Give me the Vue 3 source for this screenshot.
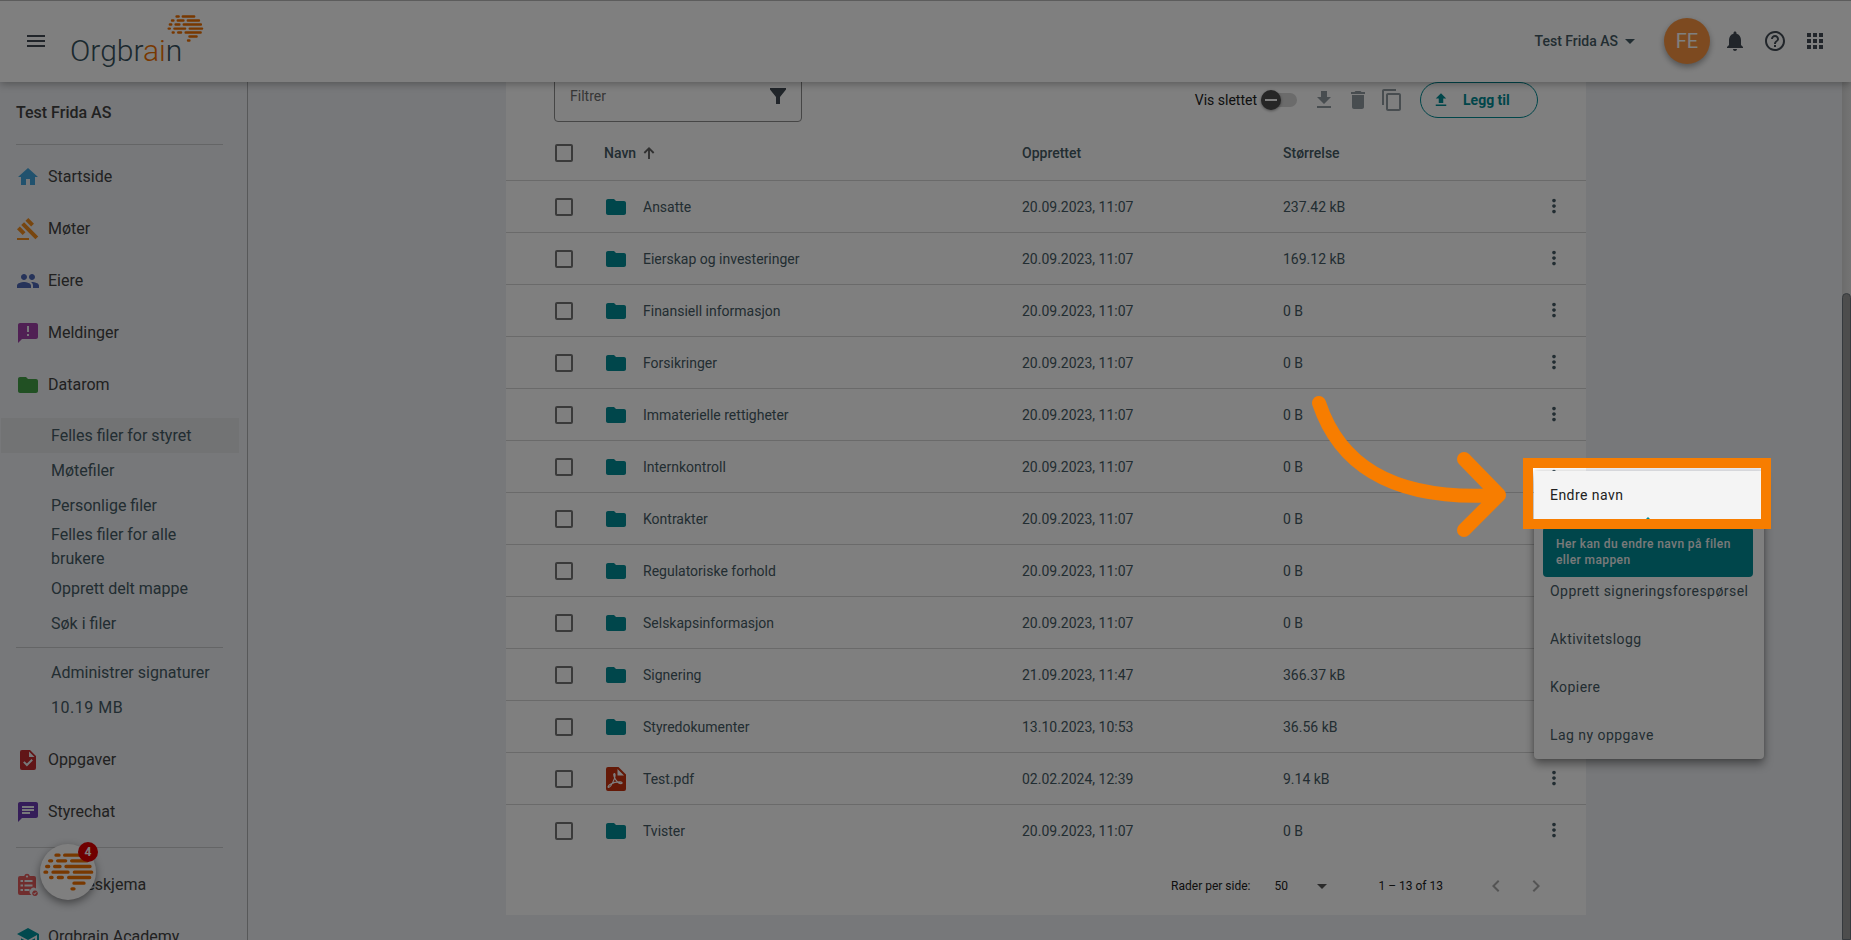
<script setup>
import { ref, h } from 'vue'

const paths = {
  menu: 'M3 18h18v-2H3v2zm0-5h18v-2H3v2zm0-7v2h18V6H3z',
  home: 'M10 20v-6h4v6h5v-8h3L12 3 2 12h3v8z',
  gavel: 'M1 21h12v2H1zM5.245 8.07l2.83-2.827 14.14 14.142-2.828 2.828zM12.317 1l5.657 5.656-2.83 2.83-5.654-5.66zM3.825 9.485l5.657 5.657-2.828 2.828-5.657-5.657z',
  group: 'M16 11c1.66 0 2.99-1.34 2.99-3S17.66 5 16 5s-3 1.34-3 3 1.34 3 3 3zm-8 0c1.66 0 2.99-1.34 2.99-3S9.66 5 8 5 5 6.34 5 8s1.34 3 3 3zm0 2c-2.33 0-7 1.17-7 3.5V19h14v-2.5c0-2.33-4.67-3.5-7-3.5zm8 0c-.29 0-.62.02-.97.05 1.16.84 1.97 1.97 1.97 3.45V19h6v-2.5c0-2.33-4.67-3.5-7-3.5z',
  announcement: 'M20 2H4c-1.1 0-1.99.9-1.99 2L2 22l4-4h14c1.1 0 2-.9 2-2V4c0-1.1-.9-2-2-2zm-7 9h-2V5h2v6zm0 4h-2v-2h2v2z',
  folder: 'M10 4H4c-1.1 0-1.99.9-1.99 2L2 18c0 1.1.9 2 2 2h16c1.1 0 2-.9 2-2V8c0-1.1-.9-2-2-2h-8l-2-2z',
  task: 'M6 2h8l6 6v12a2 2 0 0 1-2 2H6a2 2 0 0 1-2-2V4a2 2 0 0 1 2-2zM13 3.5V9h5.5zM10.9 18.4l6-6-1.4-1.4-4.6 4.6-2.4-2.4-1.4 1.4z',
  chat: 'M20 2H4c-1.1 0-1.99.9-1.99 2L2 22l4-4h14c1.1 0 2-.9 2-2V4c0-1.1-.9-2-2-2zM6 9h12v2H6V9zm8 5H6v-2h8v2zm4-6H6V6h12v2z',
  form: 'M4 3h4.2a2.9 2.9 0 0 1 5.600 0H18a2 2 0 0 1 2 2v10.500a3.800 3.800 0 0 0-4.600 6.500H4a2 2 0 0 1-2-2V5a2 2 0 0 1 2-2zM11 2.500a1 1 0 1 0 .01 0zM4.500 7v2H7V7zM8.500 7v2h8V7zM4.500 11.500v2H7v-2zM8.500 11.500v2h8v-2zM4.500 16v2H7v-2zM8.500 16v2h5v-2zM19 17.500a2.800 2.800 0 1 0 .01 0zM18.700 21.800l2-2.200-.7-.6-1.400 1.500-.7-.6-.6.7z',
  school: 'M5 13.18v4L12 21l7-3.820v-4L12 17l-7-3.820zM12 3L1 9l11 6 9-4.910V17h2V9L12 3z',
  bell: 'M12 22c1.100 0 2-.9 2-2h-4c0 1.100.89 2 2 2zm6-6v-5c0-3.070-1.640-5.640-4.500-6.320V4c0-.83-.67-1.500-1.500-1.500s-1.500.67-1.500 1.500v.68C7.630 5.360 6 7.920 6 11v5l-2 2v1h16v-1l-2-2z',
  help: 'M11 18h2v-2h-2v2zm1-16C6.480 2 2 6.480 2 12s4.480 10 10 10 10-4.480 10-10S17.520 2 12 2zm0 18c-4.410 0-8-3.590-8-8s3.590-8 8-8 8 3.590 8 8-3.590 8-8 8zm0-14c-2.210 0-4 1.790-4 4h2c0-1.100.9-2 2-2s2 .9 2 2c0 2-3 1.750-3 5h2c0-2.250 3-2.500 3-5 0-2.210-1.790-4-4-4z',
  apps: 'M4 8h4V4H4v4zm6 12h4v-4h-4v4zm-6 0h4v-4H4v4zm0-6h4v-4H4v4zm6 0h4v-4h-4v4zm6-10v4h4V4h-4zm-6 4h4V4h-4v4zm6 6h4v-4h-4v4zm0 6h4v-4h-4v4z',
  caret: 'M7 10l5 5 5-5z',
  filter: 'M4 4h16v1.500L14 13v7h-4v-7L4 5.500z',
  download: 'M19 9h-4V3H9v6H5l7 7 7-7zM5 18v2h14v-2H5z',
  upload: 'M9 16h6v-6h4l-7-7-7 7h4zm-4 2h14v2H5z',
  trash: 'M6 19c0 1.100.9 2 2 2h8c1.100 0 2-.9 2-2V7H6v12zM19 4h-3.500l-1-1h-5l-1 1H5v2h14V4z',
  copy: 'M16 1H4c-1.100 0-2 .9-2 2v14h2V3h12V1zm3 4H8c-1.100 0-2 .9-2 2v14c0 1.100.9 2 2 2h11c1.100 0 2-.9 2-2V7c0-1.100-.9-2-2-2zm0 16H8V7h11v14z',
  up: 'M4 11l2 2 4.600-4.600V21h2.800V8.400L18 13l2-2-8-8z',
  more: 'M12 8c1.100 0 2-.9 2-2s-.9-2-2-2-2 .9-2 2 .9 2 2 2zm0 2c-1.100 0-2 .9-2 2s.9 2 2 2 2-.9 2-2-.9-2-2-2zm0 6c-1.100 0-2 .9-2 2s.9 2 2 2 2-.9 2-2-.9-2-2-2z',
  prev: 'M15.410 7.410L14 6l-6 6 6 6 1.410-1.410L10.830 12z',
  next: 'M10 6L8.590 7.410 13.170 12l-4.580 4.590L10 18l6-6z',
}

const Icon = ({ name, size = 24 }) =>
  h('svg', { viewBox: '0 0 24 24', width: size, height: size, fill: 'currentColor', 'fill-rule': 'evenodd', 'aria-hidden': 'true' }, [
    h('path', { d: paths[name] }),
  ])

const brainDashes = [
  [465, 167, 176], [465, 193, 241],
  [482, 148, 154], [482, 172, 196], [482, 214, 261],
  [499, 139, 145], [499, 163, 179], [499, 197, 269],
  [516, 134, 139], [516, 158, 203], [516, 222, 274],
  [532, 151, 155], [532, 174, 186], [532, 205, 268],
  [549, 221, 251],
  [566, 215, 221],
].map(([y, a, b]) => `M${a} ${y}H${b}`).join('')

const Brain = ({ width, height }) =>
  h('svg', { viewBox: '128 459 153 113', width, height, fill: 'none', stroke: '#f07000', 'stroke-width': 10, 'stroke-linecap': 'round', 'aria-hidden': 'true' }, [
    h('path', { d: brainDashes }),
  ])
Icon.props = ['name', 'size']
Brain.props = ['width', 'height']

const mainNav = [
  { label: 'Startside', icon: 'home', tone: 'blue' },
  { label: 'Møter', icon: 'gavel', tone: 'orange' },
  { label: 'Eiere', icon: 'group', tone: 'indigo' },
  { label: 'Meldinger', icon: 'announcement', tone: 'purple' },
  { label: 'Datarom', icon: 'folder', tone: 'green' },
]
const subNav = ['Felles filer for styret', 'Møtefiler', 'Personlige filer', 'Felles filer for alle brukere', 'Opprett delt mappe', 'Søk i filer']
const lowerNav = [
  { label: 'Oppgaver', icon: 'task', tone: 'red' },
  { label: 'Styrechat', icon: 'chat', tone: 'violet' },
]
const extraNav = [
  { label: 'Spørreskjema', icon: 'form', tone: 'coral' },
  { label: 'Orgbrain Academy', icon: 'school', tone: 'teal' },
]
const rows = [
  ['Ansatte', '20.09.2023, 11:07', '237.42 kB'],
  ['Eierskap og investeringer', '20.09.2023, 11:07', '169.12 kB'],
  ['Finansiell informasjon', '20.09.2023, 11:07', '0 B'],
  ['Forsikringer', '20.09.2023, 11:07', '0 B'],
  ['Immaterielle rettigheter', '20.09.2023, 11:07', '0 B'],
  ['Internkontroll', '20.09.2023, 11:07', '0 B'],
  ['Kontrakter', '20.09.2023, 11:07', '0 B'],
  ['Regulatoriske forhold', '20.09.2023, 11:07', '0 B'],
  ['Selskapsinformasjon', '20.09.2023, 11:07', '0 B'],
  ['Signering', '21.09.2023, 11:47', '366.37 kB'],
  ['Styredokumenter', '13.10.2023, 10:53', '36.56 kB'],
  ['Test.pdf', '02.02.2024, 12:39', '9.14 kB'],
  ['Tvister', '20.09.2023, 11:07', '0 B'],
].map(([name, created, size]) => ({ name, created, size, pdf: name.endsWith('.pdf') }))

const menuItems = ['Opprett signeringsforespørsel', 'Aktivitetslogg', 'Kopiere', 'Lag ny oppgave']
const filter = ref('')
const showDeleted = ref(false)
const pageSize = ref('50')
</script>

<template>
  <div class="page">
    <header class="topbar">
      <button class="icon-btn" aria-label="Meny"><Icon name="menu" /></button>
      <a class="logo" href="#" aria-label="Orgbrain">
        <span class="wordmark">Orgbr<span class="accent">ai</span>n</span>
        <Brain class="logo-mark" :width="37" :height="27" />
      </a>
      <div class="top-actions">
        <button class="company">Test Frida AS <Icon name="caret" /></button>
        <button class="avatar">FE</button>
        <button class="icon-btn" aria-label="Varsler"><Icon name="bell" /></button>
        <button class="icon-btn" aria-label="Hjelp"><Icon name="help" /></button>
        <button class="icon-btn" aria-label="Apper"><Icon name="apps" /></button>
      </div>
    </header>

    <div class="body">
      <nav class="sidebar">
        <h2>Test Frida AS</h2>
        <hr />
        <a v-for="n in mainNav" :key="n.label" href="#" class="nav-item">
          <Icon :name="n.icon" :class="n.tone" />{{ n.label }}
        </a>
        <div class="sub">
          <a v-for="(s, i) in subNav" :key="s" href="#" :class="{ active: i === 0 }">{{ s }}</a>
        </div>
        <hr class="tight" />
        <div class="sub last">
          <a href="#">Administrer signaturer</a>
          <span class="usage">10.19 MB</span>
        </div>
        <a v-for="n in lowerNav" :key="n.label" href="#" class="nav-item">
          <Icon :name="n.icon" :class="n.tone" />{{ n.label }}
        </a>
        <hr class="loose" />
        <a v-for="n in extraNav" :key="n.label" href="#" class="nav-item">
          <Icon :name="n.icon" :class="n.tone" />{{ n.label }}
        </a>
      </nav>

      <main>
        <section class="card">
          <div class="toolbar">
            <div class="filter">
              <input v-model="filter" type="text" placeholder="Filtrer" aria-label="Filtrer" />
              <Icon name="filter" />
            </div>
            <label class="toggle">
              Vis slettet
              <input v-model="showDeleted" type="checkbox" role="switch" />
              <span class="track"><span class="knob"></span></span>
            </label>
            <button class="tool" aria-label="Last ned"><Icon name="download" /></button>
            <button class="tool" aria-label="Slett"><Icon name="trash" /></button>
            <button class="tool" aria-label="Kopier"><Icon name="copy" /></button>
            <button class="add"><Icon name="upload" :size="18" />Legg til</button>
          </div>

          <table>
            <colgroup>
              <col class="c-check" /><col /><col class="c-date" /><col class="c-size" /><col class="c-more" />
            </colgroup>
            <thead>
              <tr>
                <th class="check"><input type="checkbox" aria-label="Velg alle" /></th>
                <th><span class="sort">Navn <Icon name="up" :size="16" /></span></th>
                <th>Opprettet</th>
                <th>Størrelse</th>
                <th></th>
              </tr>
            </thead>
            <tbody>
              <tr v-for="r in rows" :key="r.name">
                <td class="check"><input type="checkbox" :aria-label="r.name" /></td>
                <td>
                  <span class="file">
                    <svg v-if="r.pdf" class="pdf" viewBox="0 0 24 24" width="24" height="24" aria-hidden="true">
                      <path fill="#c8330f" fill-rule="evenodd" d="M4 0h10.500L22 7.500V22a2 2 0 0 1-2 2H4a2 2 0 0 1-2-2V2a2 2 0 0 1 2-2zM13.500 2v6.500H20z" />
                      <path fill="none" stroke="#fff" stroke-width="1.200" stroke-linejoin="round" d="M10.200 6.500c-1.300.6.300 4.300 1.500 6.200 1.500 2.300 3.800 3.900 5.300 3.900 1.600 0 1.500-1.700-.7-1.800-3.200-.1-7.500 1-9.900 2.400-2.200 1.200-2.800 3.100-1.900 3.200 1.600.2 4.400-5 5.800-8.500.8-2.200 1.200-5.600-.1-5.400z" />
                    </svg>
                    <Icon v-else name="folder" class="folder" />
                    {{ r.name }}
                  </span>
                </td>
                <td>{{ r.created }}</td>
                <td>{{ r.size }}</td>
                <td class="more"><button :aria-label="'Valg for ' + r.name"><Icon name="more" :size="22" /></button></td>
              </tr>
            </tbody>
          </table>

          <footer class="pager">
            <label for="size">Rader per side:</label>
            <span class="select">
              <select id="size" v-model="pageSize"><option>50</option><option>100</option></select>
              <Icon name="caret" />
            </span>
            <span class="range">1 – 13 of 13</span>
            <button disabled aria-label="Forrige"><Icon name="prev" /></button>
            <button disabled aria-label="Neste"><Icon name="next" /></button>
          </footer>

          <div class="menu" role="menu">
            <button class="hover" role="menuitem">Endre navn</button>
            <div class="tip-slot">
              <div class="tip" role="tooltip">Her kan du endre navn på filen eller mappen</div>
            </div>
            <button v-for="m in menuItems" :key="m" role="menuitem">{{ m }}</button>
          </div>
          <div class="spotlight"></div>
          <svg class="arrow" viewBox="0 0 200 150" width="200" height="150" aria-hidden="true">
            <path d="M13 15C32 72 80 114 193 107M158 71L193 107L158 142" />
          </svg>
        </section>
      </main>
      <div class="scrollbar"><div class="thumb"></div></div>
    </div>

    <button class="chat" aria-label="Chat">
      <Brain :width="51" :height="38" />
      <span class="badge">4</span>
    </button>
  </div>
</template>

<style>
html,
body {
  overflow: hidden;
}
</style>

<style scoped>
.page,
.page * {
  box-sizing: border-box;
}
.page {
  position: relative;
  display: flex;
  flex-direction: column;
  height: 100vh;
  overflow: hidden;
  background: #eef0f4;
  color: #455a64;
  font: 14px/20px Roboto, "Open Sans", sans-serif;
}
svg {
  display: block;
  flex: none;
}
button {
  padding: 0;
  border: 0;
  background: none;
  color: inherit;
  font: inherit;
  cursor: pointer;
}
a {
  color: inherit;
  text-decoration: none;
}
.topbar {
  position: relative;
  z-index: 5;
  display: flex;
  flex: none;
  align-items: center;
  height: 82px;
  padding: 0 24px;
  background: #fff;
  box-shadow: inset 0 1px 0 #b8b8b8, 0 2px 8px rgba(0, 0, 0, 0.3);
}
.icon-btn {
  color: #424b54;
}
.logo {
  display: flex;
  align-items: flex-start;
  height: 52px;
  margin-left: 22px;
}
.wordmark {
  padding-top: 18px;
  color: #37525e;
  font: 300 30px/36px Roboto, "Noto Sans", sans-serif;
}
.accent {
  color: #f07000;
}
.logo-mark {
  margin-left: -15px;
}
.top-actions {
  display: flex;
  align-items: center;
  gap: 16px;
  margin-left: auto;
}
.company {
  display: flex;
  align-items: center;
  margin-right: 6px;
  font-weight: 500;
}
.avatar {
  width: 46px;
  height: 46px;
  margin-right: -3px;
  border-radius: 50%;
  background: #fb9540;
  color: #fff;
  font-size: 20px;
  box-shadow: 0 3px 6px rgba(0, 0, 0, 0.35);
}
.body {
  display: flex;
  flex: 1;
  min-height: 0;
}
.sidebar {
  flex: none;
  width: 248px;
  padding-top: 19px;
  border-right: 1px solid #aeb0b3;
  color: #424242;
  font-size: 16px;
  line-height: 24px;
}
.sidebar h2 {
  margin: 0 16px;
  font-size: 16px;
  font-weight: 500;
}
.sidebar hr {
  height: 1px;
  margin: 19px 24px 6px 16px;
  border: 0;
  background: #c9cacc;
}
.sidebar hr.tight {
  margin: 6px 24px 7px 16px;
}
.sidebar hr.loose {
  margin: 9px 24px 11px 16px;
}
.nav-item {
  display: flex;
  align-items: center;
  gap: 8px;
  height: 52px;
  padding-left: 16px;
}
.sub {
  margin: 7px 8px 0 1px;
  color: #455a64;
}
.sub.last {
  margin: 0 8px 9px 1px;
}
.sub a,
.sub span {
  display: flex;
  align-items: center;
  min-height: 35px;
  padding: 0 40px 0 50px;
}
.sub.last a {
  padding-right: 0;
}
.sub .active {
  background: #e4e6e9;
  padding-right: 0;
}
.sub .usage {
  letter-spacing: 0.5px;
}
.blue { color: #42a5dc; }
.orange { color: #f08c1e; }
.indigo { color: #4c66b4; }
.purple { color: #a040a8; }
.green { color: #43a047; }
.red { color: #c22a2e; }
.violet { color: #6a3ab2; }
.coral { color: #e05a5a; }
.teal { color: #00929c; }

main {
  flex: 1;
  min-width: 0;
  padding-left: 2px;
}
.card {
  position: relative;
  max-width: 1080px;
  margin: 0 auto;
  background: #fff;
}
.toolbar {
  display: flex;
  align-items: flex-start;
  height: 42px;
  padding: 0 48px;
}
.filter {
  display: flex;
  align-items: center;
  justify-content: space-between;
  width: 248px;
  height: 56px;
  margin: -16px auto 0 0;
  padding: 4px 11px 0 15px;
  border: 1px solid #8c8c8c;
  border-radius: 4px;
  color: #424b54;
}
.filter input {
  width: 160px;
  padding: 0;
  border: 0;
  outline: 0;
  background: none;
  font: inherit;
  line-height: 20px;
}
.filter input::placeholder {
  color: #6e6e6e;
  opacity: 1;
}
.toggle {
  display: flex;
  align-items: center;
  gap: 4px;
  height: 36px;
  margin-right: 15px;
  color: #212121;
}
.toggle input {
  position: absolute;
  opacity: 0;
}
.track {
  position: relative;
  width: 36px;
  height: 14px;
  border-radius: 7px;
  background: #d6d6d6;
}
.knob {
  position: absolute;
  top: -3px;
  left: 0;
  width: 20px;
  height: 20px;
  padding: 9px 4px;
  border-radius: 50%;
  background: #4c4c4c;
  box-shadow: 0 1px 3px rgba(0, 0, 0, 0.4);
}
.knob::before {
  display: block;
  height: 2px;
  background: #fff;
  content: "";
}
.tool {
  height: 36px;
  margin-right: 10px;
  color: #919ba1;
}
.tool:nth-of-type(3) {
  margin-right: 16px;
}
.add {
  display: flex;
  align-items: center;
  gap: 13px;
  width: 118px;
  height: 36px;
  padding-left: 11px;
  border: 1px solid #008c95;
  border-radius: 18px;
  color: #008c95;
  font-weight: 700;
}
table {
  width: 100%;
  border-collapse: separate;
  border-spacing: 0;
  table-layout: fixed;
}
.c-check { width: 98px; }
.c-date { width: 261px; }
.c-size { width: 238px; }
.c-more { width: 65px; }
th,
td {
  height: 52px;
  padding: 0;
  border-bottom: 1px solid #d4d4d4;
  text-align: left;
}
th {
  height: 57px;
  padding-top: 2px;
  font-weight: 500;
}
tbody tr:last-child td {
  border-bottom: 0;
}
.check {
  padding-left: 49px;
}
.check input {
  display: block;
  width: 18px;
  height: 18px;
  margin: 0;
  border: 2px solid #757575;
  border-radius: 2px;
  appearance: none;
}
.sort {
  display: flex;
  align-items: center;
  gap: 5px;
}
.sort svg {
  color: #616161;
}
.file {
  display: flex;
  align-items: center;
  gap: 15px;
}
.folder {
  color: #008c96;
}
.more {
  padding-bottom: 2px;
}
.more button {
  display: block;
  margin: 0 auto;
}
.pager {
  display: flex;
  align-items: center;
  justify-content: flex-end;
  height: 58px;
  padding-right: 38px;
  color: #212121;
  font-size: 12px;
}
.select {
  position: relative;
  display: flex;
  width: 60px;
  margin: 0 44px 0 24px;
}
.select select {
  width: 100%;
  padding: 0;
  border: 0;
  outline: 0;
  background: none;
  color: inherit;
  font: inherit;
  appearance: none;
}
.select svg {
  position: absolute;
  top: -2px;
  right: 0;
  color: #555;
  pointer-events: none;
}
.range {
  margin-right: 41px;
}
.pager button {
  color: #a8a8a8;
}
.pager button + button {
  margin-left: 16px;
}
.menu {
  position: absolute;
  z-index: 6;
  top: 389px;
  right: -178px;
  width: 230px;
  border-radius: 4px;
  background: #fff;
  color: #455a64;
  letter-spacing: 0.45px;
  box-shadow: 0 5px 10px rgba(0, 0, 0, 0.4), 0 0 4px rgba(0, 0, 0, 0.15);
}
.menu > button {
  display: block;
  width: 100%;
  height: 48px;
  padding: 0 16px;
  letter-spacing: inherit;
  text-align: left;
  white-space: nowrap;
}
.menu .hover {
  background: #f4f4f4;
  color: #212121;
}
.tip-slot {
  height: 48px;
}
.tip {
  position: absolute;
  top: 56px;
  left: 9px;
  width: 210px;
  padding: 9px 13px;
  border-radius: 4px;
  background: #008c96;
  color: #f4f4f4;
  font-size: 12px;
  font-weight: 500;
  line-height: 16px;
  letter-spacing: 0.4px;
}
.tip::before {
  position: absolute;
  bottom: 100%;
  left: 95px;
  border: 10px solid transparent;
  border-top: 0;
  border-bottom-color: #008c96;
  content: "";
}
.spotlight {
  position: absolute;
  z-index: 20;
  top: 376px;
  right: -185px;
  width: 248px;
  height: 71px;
  border: 10px solid #f77d00;
  box-shadow: 0 0 0 3000px rgba(0, 0, 0, 0.5);
  pointer-events: none;
}
.arrow {
  position: absolute;
  z-index: 21;
  top: 306px;
  right: 80px;
  fill: none;
  stroke: #f77d00;
  stroke-width: 14px;
  stroke-linecap: round;
  stroke-linejoin: round;
  pointer-events: none;
}
.scrollbar {
  width: 9px;
  padding-top: 211px;
  background: linear-gradient(90deg, #d8d8d8, #e8e8e8);
}
.thumb {
  height: 100%;
  border: 1px solid #6c747c;
  border-radius: 5px 5px 0 0;
  background: #9a9a9a;
}
.chat {
  position: absolute;
  z-index: 6;
  bottom: 40px;
  left: 40px;
  display: flex;
  align-items: center;
  justify-content: center;
  width: 56px;
  height: 56px;
  border-radius: 50%;
  background: #fff;
  box-shadow: 0 3px 8px rgba(0, 0, 0, 0.45);
}
.badge {
  position: absolute;
  top: -2px;
  right: -2px;
  width: 20px;
  height: 20px;
  border-radius: 50%;
  background: #e00000;
  color: #fff;
  font-size: 12px;
  font-weight: 700;
  line-height: 20px;
}
</style>
